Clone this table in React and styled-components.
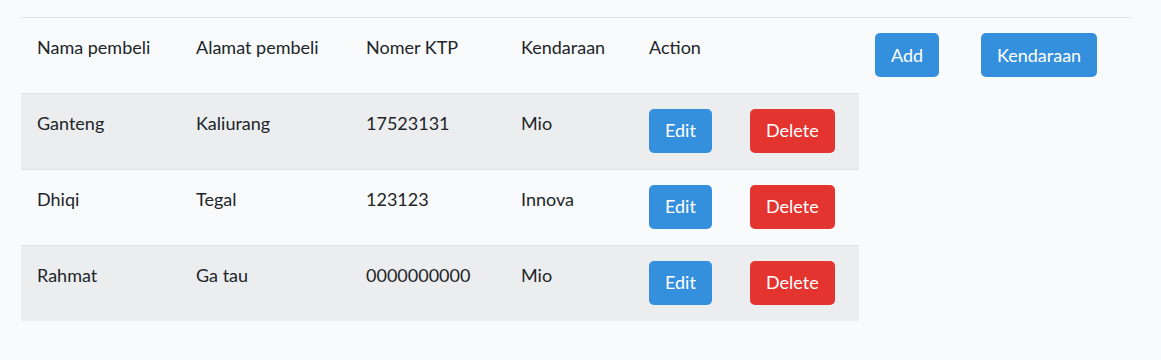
import React from 'react';
import styled, { createGlobalStyle } from 'styled-components';

const GlobalStyle = createGlobalStyle`
  body {
    margin: 0;
    background: #f8fafc;
    color: #212529;
    font-family: Lato, "Open Sans", sans-serif;
    font-size: 18px;
    line-height: 1.6;
  }
`;

const buyers = [
  { name: 'Ganteng', address: 'Kaliurang', ktp: '17523131', vehicle: 'Mio' },
  { name: 'Dhiqi', address: 'Tegal', ktp: '123123', vehicle: 'Innova' },
  { name: 'Rahmat', address: 'Ga tau', ktp: '0000000000', vehicle: 'Mio' },
];

const widths = [159, 170, 155, 128, 101, 125, 106, 166];

function App() {
  return (
    <>
      <GlobalStyle />
      <Container>
        <Table>
          <colgroup>
            {widths.map((w, i) => (
              <col key={i} width={w} />
            ))}
          </colgroup>
          <thead>
            <tr>
              <Th>Nama pembeli</Th>
              <Th>Alamat pembeli</Th>
              <Th>Nomer KTP</Th>
              <Th>Kendaraan</Th>
              <Th>Action</Th>
              <Th />
              <Th>
                <Button>Add</Button>
              </Th>
              <Th>
                <Button>Kendaraan</Button>
              </Th>
            </tr>
          </thead>
          <tbody>
            {buyers.map((b, i) => (
              <tr key={b.name}>
                <Td $striped={i % 2 === 0}>{b.name}</Td>
                <Td $striped={i % 2 === 0}>{b.address}</Td>
                <Td $striped={i % 2 === 0}>{b.ktp}</Td>
                <Td $striped={i % 2 === 0}>{b.vehicle}</Td>
                <Td $striped={i % 2 === 0}>
                  <Button>Edit</Button>
                </Td>
                <Td $striped={i % 2 === 0}>
                  <Button $variant="danger">Delete</Button>
                </Td>
              </tr>
            ))}
          </tbody>
        </Table>
      </Container>
    </>
  );
}

const Container = styled.div`
  padding: 17px 30px 39px 21px;
`;

const Table = styled.table`
  width: 1110px;
  table-layout: fixed;
  border-collapse: collapse;
  border-spacing: 0;
`;

const Th = styled.th`
  text-align: left;
  font-weight: 400;
  vertical-align: top;
  padding: 15px 16px 16px;
  border-top: 1px solid #dee2e6;
  white-space: nowrap;
`;

const Td = styled.td`
  vertical-align: top;
  padding: 15px 16px 16px;
  border-top: 1px solid #dee2e6;
  background: ${(p) => (p.$striped ? '#ecedef' : 'transparent')};
  white-space: nowrap;
`;

const Button = styled.button`
  display: inline-flex;
  align-items: center;
  justify-content: center;
  height: 44px;
  padding: 0 15px;
  border: 1px solid transparent;
  border-radius: 5px;
  background: ${(p) => (p.$variant === 'danger' ? '#e3342f' : '#3490dc')};
  color: #fff;
  font-family: inherit;
  font-size: 18px;
  line-height: 1.6;
  cursor: pointer;
`;

export default App;
